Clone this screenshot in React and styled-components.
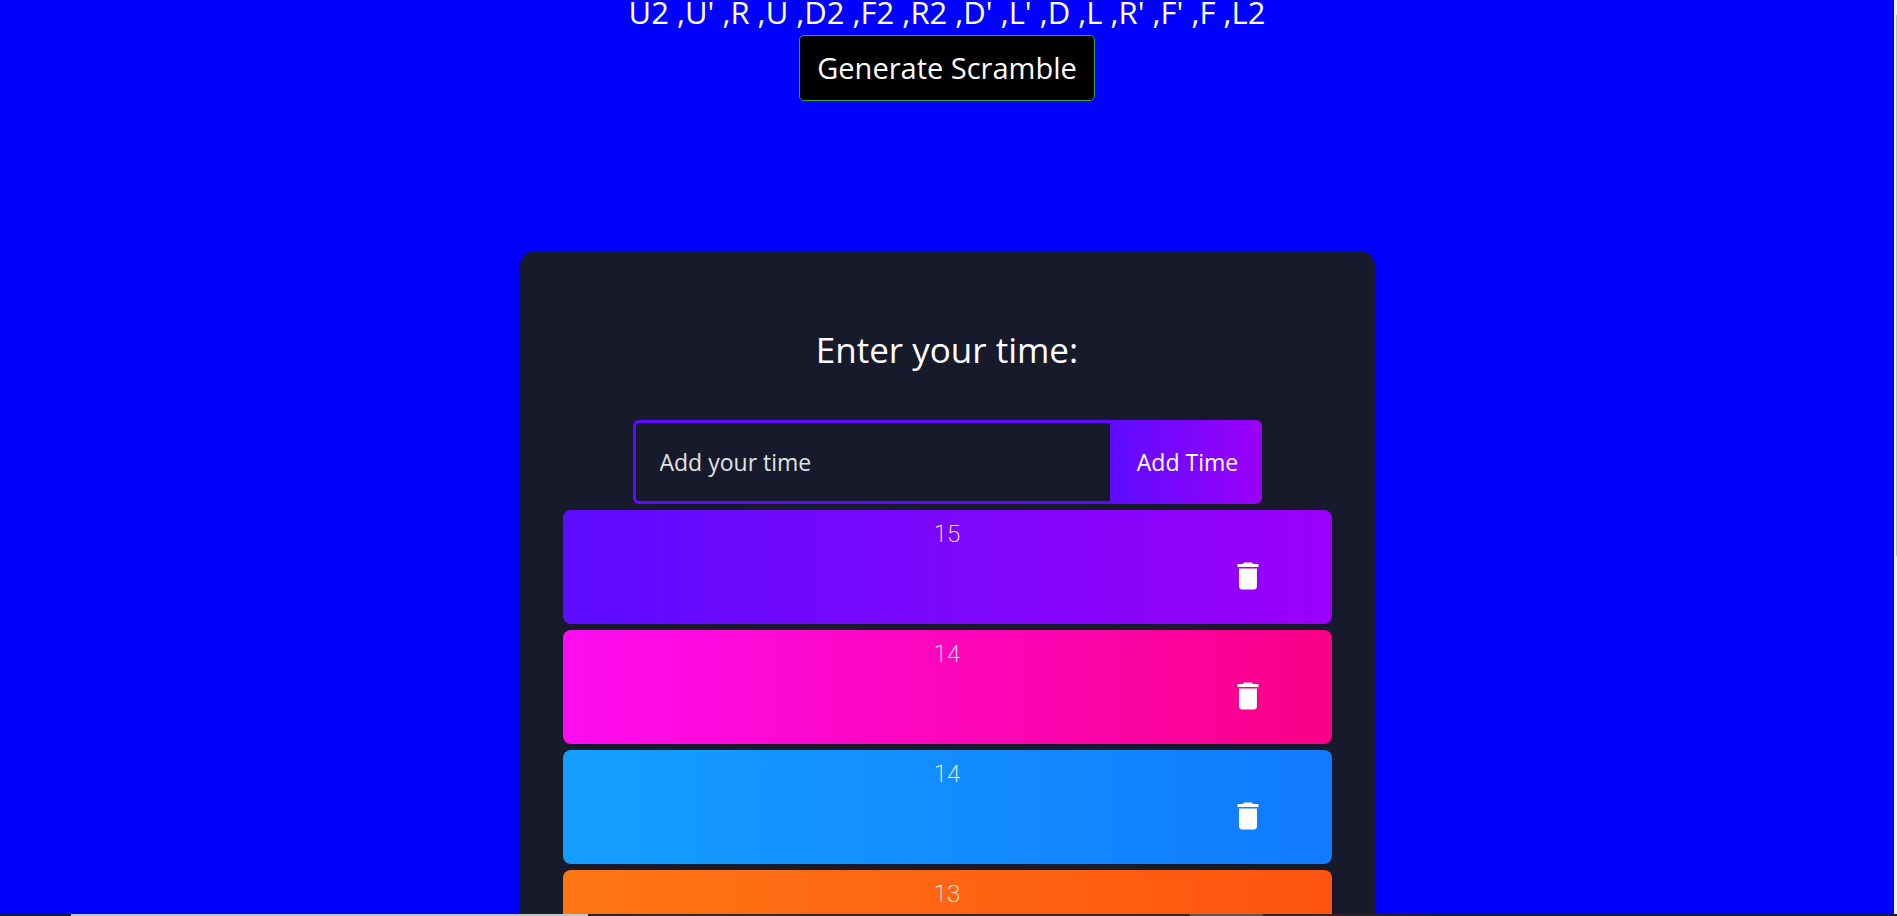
import React, { useState } from "react";
import styled, { createGlobalStyle } from "styled-components";
import { MdDelete } from "react-icons/md";

const violet = "linear-gradient(90deg, #5d0cff 0%, #9b00fa 100%)";
const gradients = [
  violet,
  "linear-gradient(90deg, #ff0cf1 0%, #fa0087 100%)",
  "linear-gradient(90deg, #149fff 0%, #117aff 100%)",
  "linear-gradient(90deg, #ff7614 0%, #ff5411 100%)",
];

const GlobalStyle = createGlobalStyle`
  * { box-sizing: border-box; margin: 0; }
  body {
    background: #0000ff;
    color: #fff;
    font-family: "Trebuchet MS", "Open Sans", "Noto Sans", sans-serif;
    overflow: hidden;
  }
  button, input { font: inherit; }
`;

const Screen = styled.div`
  display: flex;
  height: 100vh;
  overflow: hidden;
`;

const Page = styled.main`
  flex: 1;
  display: flex;
  flex-direction: column;
  align-items: center;
`;

const ScrollTrack = styled.div`
  width: 3px;
  padding: 15px 0 0 2px;
  background: #f0f0f0;
`;

const ScrollThumb = styled.div`
  height: 60%;
  background: #c1c1c1;
`;

const Scramble = styled.p`
  font-size: 31px;
  line-height: 24px;
  padding-bottom: 11px;
  white-space: nowrap;
`;

const GenerateButton = styled.button`
  height: 66px;
  padding: 0 17px 2px;
  flex-shrink: 0;
  border: 1px solid #28a745;
  border-radius: 5px;
  background: #000;
  color: #fff;
  font-size: 29px;
  cursor: pointer;
`;

const Panel = styled.section`
  display: flex;
  flex-direction: column;
  align-items: center;
  flex-shrink: 0;
  width: 855px;
  max-width: 100%;
  margin-top: 150px;
  padding: 72px 43px 48px;
  border-radius: 15px;
  background: #161a2b;
`;

const Title = styled.h1`
  font-size: 35px;
  font-weight: 400;
  line-height: 54px;
  margin-bottom: 43px;
`;

const TimeForm = styled.form`
  display: flex;
  width: 629px;
  max-width: 100%;
  height: 84px;
  margin-bottom: 6px;
`;

const TimeInput = styled.input`
  flex: 1;
  min-width: 0;
  padding: 0 24px;
  border: 3px solid #5d0cff;
  border-right: 0;
  border-radius: 6px 0 0 6px;
  outline: none;
  background: transparent;
  color: #fff;
  font-size: 23px;
  &::placeholder { color: #e2e2e2; opacity: 1; }
`;

const AddButton = styled.button`
  width: 152px;
  padding: 0 6px 0 10px;
  border: 0;
  border-radius: 0 6px 6px 0;
  background: ${violet};
  color: #fff;
  font-size: 23px;
  cursor: pointer;
`;

const TimeList = styled.ul`
  display: flex;
  flex-direction: column;
  gap: 6px;
  width: 100%;
  padding: 0;
  list-style: none;
`;

const TimeRow = styled.li`
  display: flex;
  flex-direction: column;
  align-items: center;
  gap: 10px;
  height: 114px;
  padding: 10px 66px 0;
  border-radius: 8px;
  background: ${({ $tone }) => gradients[$tone % gradients.length]};
  font: 200 24px/28px Roboto, sans-serif;
`;

const DeleteButton = styled.button`
  display: flex;
  align-self: flex-end;
  padding: 0;
  border: 0;
  background: none;
  color: #fff;
  font-size: 36px;
  cursor: pointer;
`;

const Taskbar = styled.footer`
  position: fixed;
  inset: auto 0 0 0;
  display: grid;
  grid-template-columns: 71fr 517fr 602fr 73fr 634fr;
  height: 2px;
  background: linear-gradient(90deg, #1b1540 0%, #1b1540 27%, #35231f 34%, #35231f 70%, #1e1838 76%);
`;

const TaskbarItem = styled.span`
  grid-column: ${({ $column }) => $column};
  background: ${({ $color }) => $color};
`;

const initialTimes = [
  { id: 4, value: 15 },
  { id: 3, value: 14 },
  { id: 2, value: 14 },
  { id: 1, value: 13 },
];

export default function App() {
  const [times, setTimes] = useState(initialTimes);
  const [draft, setDraft] = useState("");

  const addTime = (event) => {
    event.preventDefault();
    if (!draft.trim()) return;
    setTimes([{ id: Date.now(), value: draft }, ...times]);
    setDraft("");
  };

  return (
    <>
      <GlobalStyle />
      <Screen>
        <Page>
          <Scramble>U2 ,U' ,R ,U ,D2 ,F2 ,R2 ,D' ,L' ,D ,L ,R' ,F' ,F ,L2</Scramble>
          <GenerateButton type="button">Generate Scramble</GenerateButton>
          <Panel>
            <Title>Enter your time:</Title>
            <TimeForm onSubmit={addTime}>
              <TimeInput
                aria-label="Add your time"
                placeholder="Add your time"
                value={draft}
                onChange={(event) => setDraft(event.target.value)}
              />
              <AddButton type="submit">Add Time</AddButton>
            </TimeForm>
            <TimeList>
              {times.map((time, index) => (
                <TimeRow key={time.id} $tone={index}>
                  <span>{time.value}</span>
                  <DeleteButton
                    type="button"
                    aria-label={`Delete ${time.value}`}
                    onClick={() => setTimes(times.filter((t) => t.id !== time.id))}
                  >
                    <MdDelete />
                  </DeleteButton>
                </TimeRow>
              ))}
            </TimeList>
          </Panel>
        </Page>
        <ScrollTrack>
          <ScrollThumb />
        </ScrollTrack>
      </Screen>
      <Taskbar>
        <TaskbarItem $column={2} $color="#c4c4c8" />
        <TaskbarItem $column={4} $color="#65544e" />
      </Taskbar>
    </>
  );
}
